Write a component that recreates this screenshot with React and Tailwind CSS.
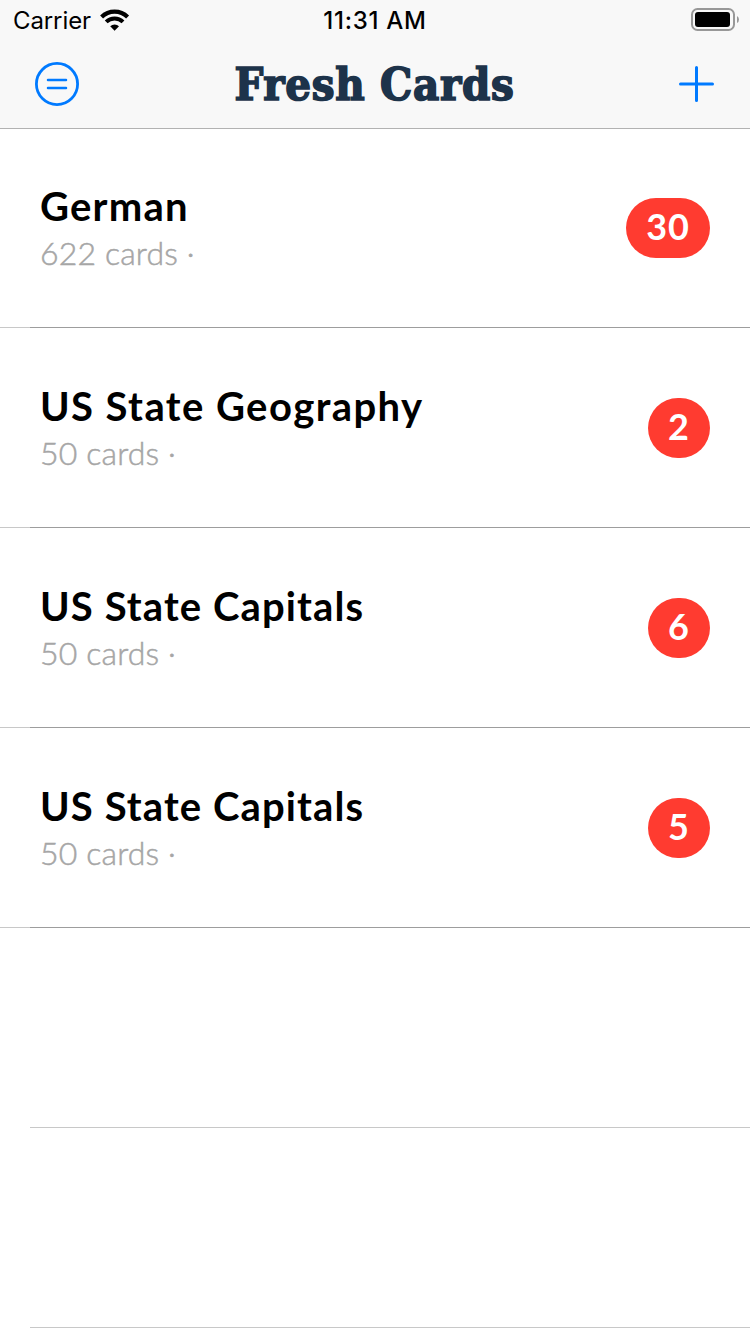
const decks = [
  { id: 1, name: "German", cards: "622 cards ·", due: "30", nameSpacing: "tracking-[1.2px]" },
  { id: 2, name: "US State Geography", cards: "50 cards ·", due: "2", nameSpacing: "tracking-[1.42px]" },
  { id: 3, name: "US State Capitals", cards: "50 cards ·", due: "6", nameSpacing: "tracking-[1.1px]" },
  { id: 4, name: "US State Capitals", cards: "50 cards ·", due: "5", nameSpacing: "tracking-[1.1px]" },
];

function WifiIcon() {
  return (
    <svg width="30" height="22" viewBox="0 0 30 22" fill="none">
      <path d="M1.6 7.9 A18.5 18.5 0 0 1 27.6 7.9" stroke="#000" strokeWidth="4.2" />
      <path d="M6.2 12.9 A12 12 0 0 1 23 12.9" stroke="#000" strokeWidth="4" />
      <path d="M10.2 17.2 A6.4 6.4 0 0 1 19 17.2 L14.6 21.7 Z" fill="#000" />
    </svg>
  );
}

function BatteryIcon() {
  return (
    <svg width="48" height="24" viewBox="0 0 48 24" fill="none">
      <rect x="1" y="1" width="42" height="21" rx="5.5" stroke="#989898" strokeWidth="2" />
      <rect x="4" y="4" width="35" height="15" rx="3" fill="#000" />
      <path d="M46 8 Q48 9 48 11.5 Q48 14 46 15 Z" fill="#989898" />
    </svg>
  );
}

function StatusBar() {
  return (
    <div className="grid h-10 grid-cols-3 text-black">
      <div className="flex items-start pl-[13px]">
        <span className="mt-[5px] w-[87px] text-[24px] leading-8 tracking-[-0.1px]">Carrier</span>
        <span className="mt-[9px] block"><WifiIcon /></span>
      </div>
      <div className="mt-[5px] text-center text-[24px] font-medium leading-8 tracking-[0.75px]">11:31 AM</div>
      <div className="flex justify-end pr-[11px] pt-2"><BatteryIcon /></div>
    </div>
  );
}

function NavBar() {
  return (
    <div className="grid h-[88px] grid-cols-[1fr_auto_1fr] items-center pl-[35px] pr-9">
      <button aria-label="Menu" className="block justify-self-start">
        <svg width="44" height="44" viewBox="0 0 44 44" fill="none" stroke="#007aff" strokeLinecap="round">
          <circle cx="22" cy="22" r="20.6" strokeWidth="2.8" />
          <path d="M13 18h18M13 26h18" strokeWidth="2.5" />
        </svg>
      </button>
      <h1 className="whitespace-nowrap pt-0.5 font-['DejaVu_Serif_Condensed','DejaVu_Serif',serif] text-[45px] font-bold leading-[60px] tracking-[0.7px] text-[#1d334a] [-webkit-text-stroke:1.6px_#1d334a]">
        Fresh Cards
      </h1>
      <button aria-label="Add" className="block justify-self-end">
        <svg width="35" height="36" viewBox="0 0 35 36" fill="none" stroke="#007aff" strokeWidth="3" strokeLinecap="round">
          <path d="M17.5 1.5v33M1.5 18h32" />
        </svg>
      </button>
    </div>
  );
}

function DeckRow({ deck }) {
  return (
    <li className="flex h-[200px] flex-col">
      <div className="flex flex-1 items-center justify-between px-10">
        <div>
          <div className={`text-[40px] font-bold leading-[50px] text-black ${deck.nameSpacing}`}>{deck.name}</div>
          <div className="text-[32px] font-light leading-[44px] tracking-[0.15px] text-[#a6a6a6] [-webkit-text-stroke:0.5px_#a6a6a6]">{deck.cards}</div>
        </div>
        <div className="flex h-[60px] min-w-[62px] items-center justify-center rounded-[30px] bg-[#ff3b30] px-5 pb-1 text-[36px] font-bold leading-[56px] tracking-[1px] text-white">
          {deck.due}
        </div>
      </div>
      <div className="flex h-px">
        <div className="w-[30px] bg-[#c8c8c8]" />
        <div className="flex-1 bg-[#9d9d9d]" />
      </div>
    </li>
  );
}

export default function App() {
  return (
    <div className="h-[1334px] w-[750px] overflow-hidden bg-white">
      <header className="h-[129px] border-b border-[#b2b2b2] bg-[#f8f8f8] font-[Inter,sans-serif]">
        <StatusBar />
        <NavBar />
      </header>
      <ul className="-mt-px font-[Lato,sans-serif]">
        {decks.map((deck) => <DeckRow key={deck.id} deck={deck} />)}
        <li className="ml-[30px] h-[200px] border-b border-[#c8c8c8]" />
        <li className="ml-[30px] h-[200px] border-b border-[#c8c8c8]" />
      </ul>
    </div>
  );
}
